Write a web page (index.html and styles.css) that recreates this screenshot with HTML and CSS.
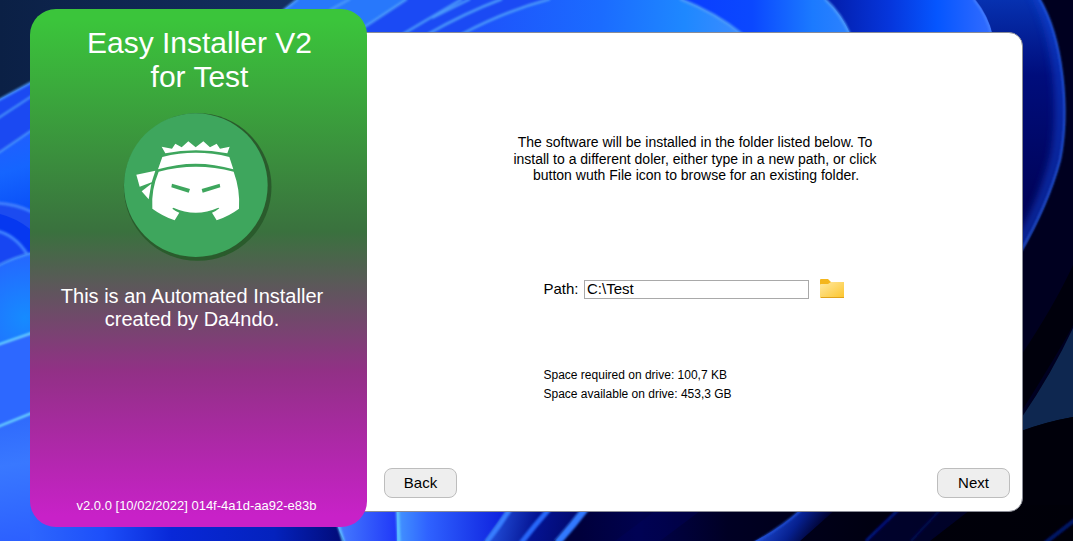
FILE: index.html
```html
<!DOCTYPE html>
<html lang="en">
<head>
<meta charset="utf-8">
<title>Easy Installer V2</title>
<link rel="stylesheet" href="styles.css">
</head>
<body>
<svg class="wallpaper" viewBox="0 0 1073 541" aria-hidden="true">
  <defs>
    <linearGradient id="petalTop" gradientUnits="userSpaceOnUse" x1="465" y1="0" x2="740" y2="20">
      <stop offset="0" stop-color="#1e50fb"/><stop offset=".5" stop-color="#1b6cff"/><stop offset=".8" stop-color="#1e88ff"/><stop offset="1" stop-color="#3c8cff"/>
    </linearGradient>
    <linearGradient id="petalTop2" gradientUnits="userSpaceOnUse" x1="700" y1="0" x2="850" y2="0">
      <stop offset="0" stop-color="#0a40ff"/><stop offset=".35" stop-color="#0b48ff"/><stop offset=".75" stop-color="#1b7aff"/><stop offset="1" stop-color="#2d82ff"/>
    </linearGradient>
    <linearGradient id="petalTop3" gradientUnits="userSpaceOnUse" x1="835" y1="0" x2="992" y2="0">
      <stop offset="0" stop-color="#0320b0"/><stop offset=".35" stop-color="#0636dc"/><stop offset=".65" stop-color="#0556ff"/><stop offset="1" stop-color="#336cff"/>
    </linearGradient>
    <linearGradient id="petalRight" gradientUnits="userSpaceOnUse" x1="0" y1="0" x2="0" y2="250">
      <stop offset="0" stop-color="#0631b0"/><stop offset=".3" stop-color="#000d7c"/><stop offset="1" stop-color="#00004c"/>
    </linearGradient>
    <linearGradient id="bottomLeft" gradientUnits="userSpaceOnUse" x1="0" y1="0" x2="343" y2="0">
      <stop offset="0" stop-color="#3470ff"/><stop offset=".3" stop-color="#1d4ffa"/><stop offset=".5" stop-color="#0828d8"/><stop offset=".8" stop-color="#0422bd"/><stop offset="1" stop-color="#020b78"/>
    </linearGradient>
    <linearGradient id="bottomMid" gradientUnits="userSpaceOnUse" x1="397" y1="0" x2="500" y2="0">
      <stop offset="0" stop-color="#4394ff"/><stop offset=".3" stop-color="#2f62ff"/><stop offset="1" stop-color="#1024df"/>
    </linearGradient>
    <linearGradient id="bottomPetal" gradientUnits="userSpaceOnUse" x1="337" y1="0" x2="397" y2="0">
      <stop offset="0" stop-color="#467dff"/><stop offset="1" stop-color="#2038f8"/>
    </linearGradient>
    <linearGradient id="navyBlue" gradientUnits="userSpaceOnUse" x1="500" y1="520" x2="585" y2="541">
      <stop offset="0" stop-color="#1d45cf"/><stop offset=".4" stop-color="#041392"/><stop offset="1" stop-color="#010662"/>
    </linearGradient>
    <linearGradient id="band" gradientUnits="userSpaceOnUse" x1="776" y1="515" x2="812" y2="541">
      <stop offset="0" stop-color="#1a42c4"/><stop offset=".5" stop-color="#06208f"/><stop offset="1" stop-color="#00002a"/>
    </linearGradient>
    <linearGradient id="darkEnd" gradientUnits="userSpaceOnUse" x1="580" y1="0" x2="1073" y2="0">
      <stop offset="0" stop-color="#00003c"/><stop offset=".12" stop-color="#00024e"/><stop offset=".3" stop-color="#000024"/><stop offset=".7" stop-color="#00000a"/><stop offset="1" stop-color="#000008"/>
    </linearGradient>
    <radialGradient id="glow" gradientUnits="userSpaceOnUse" cx="25" cy="318" r="60">
      <stop offset="0" stop-color="#168bff"/><stop offset="1" stop-color="#2469ff"/>
    </radialGradient>
    <linearGradient id="leftLow" gradientUnits="userSpaceOnUse" x1="0" y1="415" x2="20" y2="541">
      <stop offset="0" stop-color="#2e69fc"/><stop offset=".4" stop-color="#3978ff"/><stop offset="1" stop-color="#2c60ff"/>
    </linearGradient>
    <linearGradient id="leftTop" gradientUnits="userSpaceOnUse" x1="0" y1="130" x2="25" y2="210">
      <stop offset="0" stop-color="#235dff"/><stop offset=".5" stop-color="#1565ff"/><stop offset="1" stop-color="#0a50f8"/>
    </linearGradient>
    <linearGradient id="navy" gradientUnits="userSpaceOnUse" x1="0" y1="0" x2="300" y2="0">
      <stop offset="0" stop-color="#0b2045"/><stop offset="1" stop-color="#142f62"/>
    </linearGradient>
    <filter id="soft" filterUnits="userSpaceOnUse" x="-10" y="-10" width="1093" height="561"><feGaussianBlur stdDeviation=".8"/></filter>
    <filter id="wide" filterUnits="userSpaceOnUse" x="980" y="-30" width="120" height="330"><feGaussianBlur stdDeviation="5"/></filter>
  </defs>
  <rect width="1073" height="541" fill="#00000c"/>
  <rect width="367" height="200" fill="url(#navy)"/>

  <!-- left petals -->
  <path fill="#1b49f2" d="M0 99 L30 83 L285 9 L297 0 H500 V250 H0Z"/>
  <path fill="url(#leftTop)" d="M0 152 L30 131 H60 V260 H0Z"/>
  <path fill="#1c4bf0" d="M0 202 Q16 203 30 210 V280 H0Z"/>
  <path fill="#0638f0" d="M0 214 Q16 218 30 229 V280 H0Z"/>
  <path fill="#1746f2" d="M0 231 Q15 235 27 253 L0 265Z"/>
  <path fill="url(#glow)" d="M0 265 Q15 257 30 253 H60 V345 H0Z"/>
  <path fill="#2d68ff" d="M0 344 L30 333 H60 V430 H0Z"/>
  <path fill="url(#leftLow)" d="M0 426 L30 413 H60 V541 H0Z"/>
  <path fill="url(#bottomLeft)" d="M30 490 H367 V541 H30Z"/>
  <g fill="none" stroke="#4b98fa" stroke-width="2" filter="url(#soft)">
    <path d="M-3 101 L32 82"/><path d="M-3 119 L32 96"/><path d="M-3 154 L32 130"/>
    <path stroke="#3f82ff" stroke-width="3" d="M-3 203 Q16 204 32 212"/>
    <path stroke="#3f82ff" stroke-width="3" d="M-3 231 Q15 235 27 254"/>
    <path d="M-3 266 Q15 257 32 253"/>
    <path stroke="#73e2ff" d="M-3 345 L32 333"/><path stroke="#73e2ff" d="M-3 427 L32 413"/>
  </g>

  <!-- top petals -->
  <path fill="#2878fb" d="M285 9 L297 0 H406 L365 27 V40 H285Z"/>
  <path fill="#1b4af4" d="M365 27 L406 0 H560 V40 H365Z"/>
  <path fill="#0b48ff" d="M670 0 H860 V40 H670Z"/>
  <path fill="url(#petalTop2)" d="M683 0 H826 Q842 15 850 33 V40 H700Z"/>
  <path fill="url(#petalTop)" d="M460 36 Q500 12 548 0 H683 Q716 13 744 36Z"/>
  <path fill="#0217a0" d="M826 0 H1040 V40 H853 Q844 16 826 0Z"/>
  <path fill="url(#petalTop3)" d="M828 0 H975 Q988 16 993 36 H851 Q843 15 828 0Z"/>
  <g fill="none" stroke="#4b9afa" stroke-width="2.5" filter="url(#soft)">
    <path d="M283 11 L298 -1"/><path d="M330 10 L350 -1"/><path d="M363 28 L407 -1"/>
    <path d="M403 34 L462 -1"/><path d="M432 18 L470 -1"/><path d="M428 34 Q465 13 502 -1"/>
    <path d="M462 34 Q505 11 550 -1"/><path d="M680 -1 Q716 13 743 35"/>
    <path d="M825 -1 Q841 14 850 35"/><path stroke="#4480ff" d="M974 -1 Q987 15 992 35"/>
  </g>

  <!-- right petals -->
  <path fill="#000021" d="M1022 0 H1073 V330 Q1050 375 1022 417Z"/>
  <path fill="url(#petalRight)" d="M976 0 H1040 C1063 40 1070 110 1060 160 Q1048 205 1018 255 V36 H993 Q989 16 976 0Z"/>
  <path fill="none" stroke="#1748dc" stroke-width="8" opacity=".75" filter="url(#wide)" d="M1036 -8 C1060 35 1066 110 1056 158 Q1044 205 1016 250"/>
  <path fill="#000020" d="M1041 0 C1064 40 1071 110 1061 160 Q1049 205 1022 253 V330 H1073 V0Z"/>
  <path fill="none" stroke="#2455d8" stroke-width="2" filter="url(#soft)" d="M1039 -2 C1063 38 1070 110 1060 160 Q1048 205 1018 256"/>
  <path fill="#00000c" d="M1073 265 Q1055 305 1018 360 V417 Q1060 350 1073 325Z"/>
  <path fill="#0e2750" d="M1073 328 Q1052 373 1022 417 V431 Q1045 422 1073 417Z"/>
  <path fill="#00000a" d="M1018 432 Q1045 422 1073 417 V541 H1018Z"/>

  <!-- bottom petals -->
  <path fill="url(#bottomPetal)" d="M330 505 H397 V541 H344 Q339 530 335 520Z"/>
  <path fill="url(#bottomMid)" d="M397 505 H520 L484 541 H397Z"/>
  <path fill="url(#navyBlue)" d="M510 505 H590 L554 541 H484Z"/>
  <path fill="url(#darkEnd)" d="M585 505 H1073 V541 H554Z"/>
  <path fill="#010461" d="M615 541 L655 511 H700 L660 541Z" opacity=".35"/>
  <path fill="url(#band)" d="M755 541 Q782 527 800 510 H835 L800 541Z"/>
  <path fill="#000348" d="M865 541 L899 510 H970 L930 541Z" opacity=".5"/>
  <g fill="none" stroke-width="5" filter="url(#soft)">
    <path stroke="#60c4ff" stroke-width="2.5" d="M338 524 L344 543"/>
    <path stroke="#5fc6ff" stroke-width="3" d="M397.500 508 L399 543"/>
    <path stroke="#397eff" d="M486 543 Q500 525 512 506"/>
    <path stroke="#2868fa" d="M521 543 Q535 525 550 508"/>
    <path stroke="#3179ff" stroke-width="7" d="M557 543 Q573 525 586 508"/>
    <path stroke="#2451d6" stroke-width="2" d="M754 543 Q782 527 801 510"/>
    <path stroke="#05137e" stroke-width="3" d="M866 541 L898 510"/>
    <path stroke="#000b58" stroke-width="2" d="M911 541 L940 510"/>
    <path stroke="#06176a" stroke-width="4" d="M1045 543 L1076 519"/>
  </g>
</svg>

<div class="installer">
  <aside class="sidebar">
    <h1 class="title">Easy Installer V2<br>for Test</h1>
    <svg class="logo" viewBox="0 0 525 510" role="img" aria-label="Ninja logo">
      <circle cx="263" cy="261" r="221.500" fill="#2a5b2c"/>
      <circle cx="257.500" cy="255.500" r="215.500" fill="#3ea65d"/>
      <g fill="#fff">
        <path d="M155 140 L186 146 L196 131 L215 142 L235 124 L257 142 L280 124 L300 142 L320 131 L330 146 L359 140 L352 160 Q257 141 166 160Z"/>
        <path d="M157 171 Q257 146 358 171 L370 208 Q257 174 144 208Z"/>
        <path d="M79 224 L136 212 L125 247 L89 260Z"/>
        <path d="M95 274 L124 251 L116 298Z"/>
        <path d="M146 215 Q257 186 371 215 Q391 270 387 326 Q359 347 320 361 L306 338 Q319 333 328 325 L325 323 Q257 353 190 323 L187 326 Q197 334 208 338 L194 361 Q157 348 127 326 Q123 270 146 215Z"/>
      </g>
      <g fill="#3ea65d">
        <path d="M186 251 L240 267 L236 278 L184 262Z"/>
        <path d="M329 251 L275 267 L278 278 L331 262Z"/>
      </g>
    </svg>
    <p class="tagline">This is an Automated Installer<br>created by Da4ndo.</p>
    <footer class="version">v2.0.0 [10/02/2022] 014f-4a1d-aa92-e83b</footer>
  </aside>

  <main class="panel">
    <p class="intro">The software will be installed in the folder listed below. To<br>install to a different doler, either type in a new path, or click<br><span class="intro-last">button wuth File icon to browse for an existing folder.</span></p>
    <div class="path-row">
      <label class="path-label" for="path">Path:</label>
      <input class="path-input" id="path" type="text" value="C:\Test">
      <svg class="folder" viewBox="0 0 25 20" role="img" aria-label="Browse">
        <defs>
          <linearGradient id="folderFace" x1="0" y1="0" x2="1" y2="1">
            <stop offset="0" stop-color="#ffe9a2"/><stop offset="1" stop-color="#fcc52c"/>
          </linearGradient>
        </defs>
        <path fill="#f4b61d" d="M0 1 Q0 0 1 0 H8 L11 3 H24 V10 H0Z"/>
        <path fill="url(#folderFace)" d="M0 6 Q0 5 1 5 H8 L11 3 H24 V19 H0Z"/>
        <path fill="#e0a21b" d="M1 18 H24 V19 H1Z"/>
      </svg>
    </div>
    <div class="space">
      <div>Space required on drive: 100,7 KB</div>
      <div>Space available on drive: 453,3 GB</div>
    </div>
    <nav class="actions">
      <button class="button" type="button">Back</button>
      <button class="button" type="button">Next</button>
    </nav>
  </main>
</div>
</body>
</html>
```

FILE: styles.css
```css
* {
  box-sizing: border-box;
}

body {
  margin: 0;
  width: 1073px;
  height: 541px;
  overflow: hidden;
  background: #00000c;
  font-family: "Liberation Sans", Arial, sans-serif;
  color: #000;
}

.wallpaper {
  position: absolute;
  inset: 0;
  width: 1073px;
  height: 541px;
  z-index: -1;
}

.installer {
  display: flex;
  align-items: flex-start;
  padding: 9px 0 0 30px;
}

.sidebar {
  z-index: 1;
  display: flex;
  flex-direction: column;
  width: 337px;
  height: 518px;
  padding: 17px 0 13px;
  border-radius: 26px;
  background: linear-gradient(#3bc53b 2%, #3a713e 43%, #923086 70%, #c821c8 98%);
  color: #fff;
  text-align: center;
}

.title {
  margin: 0 0 0 2px;
  font-size: 30px;
  font-weight: 400;
  line-height: 34px;
}

.logo {
  width: 175px;
  height: 170px;
  margin: 6px 0 0 80px;
}

.tagline {
  margin: 15px 13px 0 0;
  font-size: 20px;
  line-height: 23px;
}

.version {
  margin-top: auto;
  margin-right: 4px;
  font-size: 13px;
  line-height: 17px;
}

.panel {
  display: flex;
  flex-direction: column;
  width: 686px;
  height: 480px;
  margin: 23px 0 0 -30px;
  padding: 101px 12px 13px 46px;
  border: 1px solid #8a8c96;
  border-radius: 14px;
  background: #fff;
}

.intro {
  width: 400px;
  margin: 0 0 0 111px;
  font-size: 14px;
  line-height: 16.5px;
  text-align: center;
}

.intro-last {
  padding-left: 2px;
}

.path-row {
  display: flex;
  align-items: center;
  margin: 95px 0 0 159.5px;
  font-size: 15px;
}

.path-label {
  width: 40.5px;
}

.path-input {
  width: 225px;
  height: 19px;
  margin-top: 1px;
  padding: 0 2px 1px;
  border: 1px solid #a9a9a9;
  border-radius: 0;
  background: #fff;
  color: #000;
  font: 15px "Liberation Sans", Arial, sans-serif;
}

.folder {
  width: 25px;
  height: 20px;
  margin-left: 11px;
}

.space {
  margin: 67px 0 0 159.5px;
  font-size: 12px;
  line-height: 19px;
}

.actions {
  display: flex;
  justify-content: space-between;
  margin-top: auto;
}

.button {
  width: 73px;
  height: 30px;
  padding: 0 0 2px;
  border: 1px solid #bdbdbd;
  border-radius: 8px;
  background: #eee;
  color: #000;
  font: 15px "Liberation Sans", Arial, sans-serif;
}
```
